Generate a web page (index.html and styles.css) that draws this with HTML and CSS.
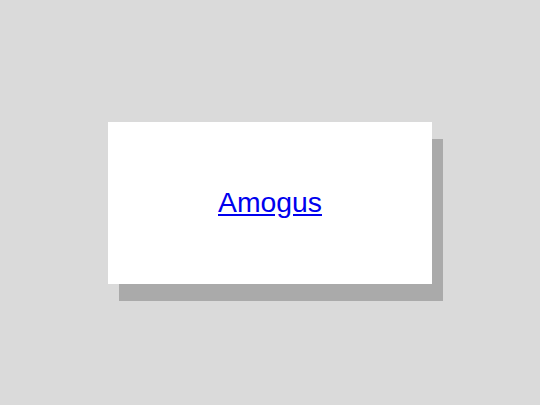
FILE: index.html
```html
<!DOCTYPE html>
<html>
<head>
<meta charset="utf-8">
<link rel="stylesheet" href="styles.css">
</head>
<body>
<div class="stage">
  <div class="card">
    <a class="link" href="#">Amogus</a>
  </div>
</div>
</body>
</html>
```
FILE: styles.css
```css
html, body {
  margin: 0;
  padding: 0;
  width: 540px;
  height: 405px;
  background: #dadada;
}
.stage {
  width: 540px;
  height: 405px;
  display: flex;
  align-items: center;
  justify-content: center;
}
.card {
  width: 324px;
  height: 162px;
  background: #ffffff;
  box-shadow: 11px 17px 0 #aaaaaa;
  display: flex;
  align-items: center;
  justify-content: center;
}
.link {
  font-family: "Liberation Sans", Arial, sans-serif;
  font-size: 28.35px;
  color: #0000ee;
  text-decoration: underline;
}
```
